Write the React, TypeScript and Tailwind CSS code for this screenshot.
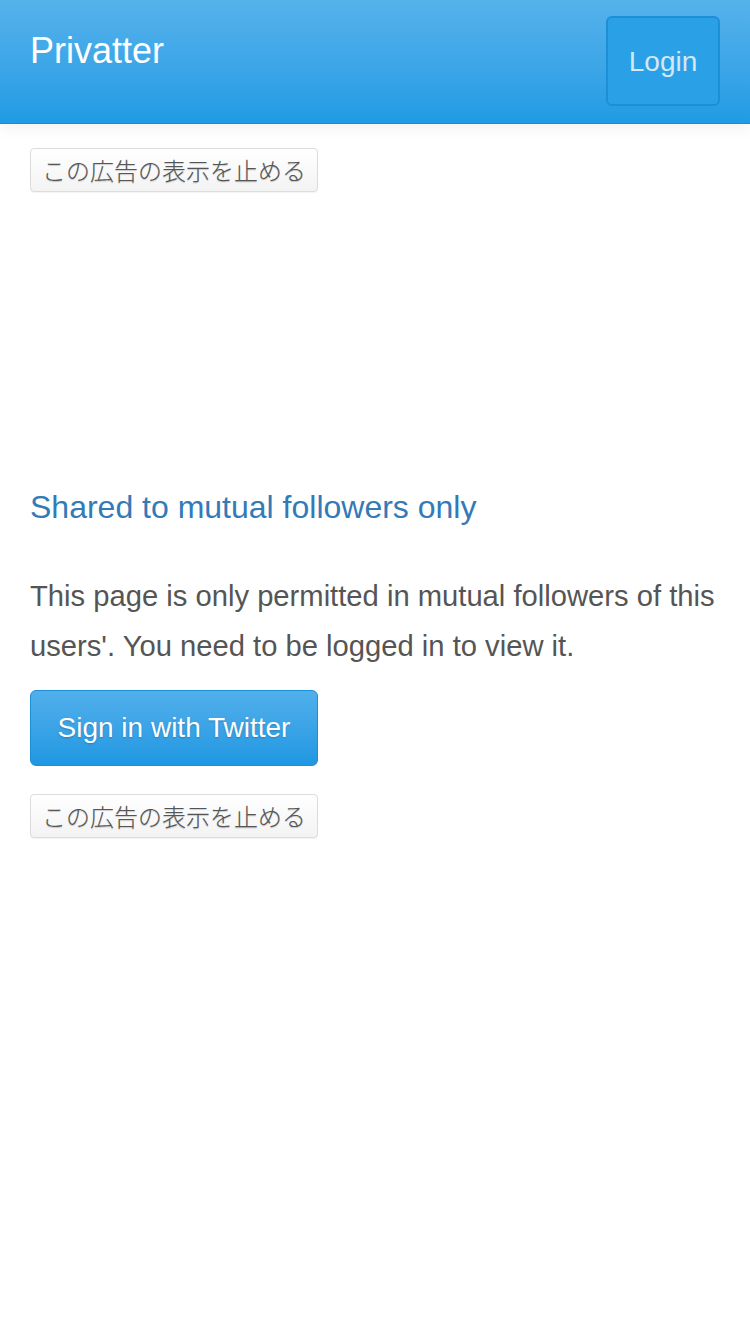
import React from 'react';

function HideAdButton() {
  return (
    <button
      type="button"
      className="block w-[288px] h-[44px] rounded-[4px] border border-[#dcdcdc] bg-gradient-to-b from-white to-[#f3f3f3] text-[24px] leading-[42px] font-light text-[#555] text-center [text-shadow:0_1px_1px_rgba(0,0,0,0.2)] shadow-[0_1px_1px_rgba(0,0,0,0.05)]"
      style={{ fontFamily: '"Noto Sans CJK JP", "Liberation Sans", sans-serif' }}
    >
      この広告の表示を止める
    </button>
  );
}

export default function App() {
  return (
    <div
      className="min-h-screen w-full bg-white text-[#555]"
      style={{ fontFamily: '"Liberation Sans", Arial, "Noto Sans CJK JP", sans-serif' }}
    >
      {/* Navbar */}
      <header className="relative z-10 h-[124px] bg-gradient-to-b from-[#55b2eb] to-[#1f9be4] border-b border-[#1a8cd5] shadow-[0_4px_16px_rgba(0,0,0,0.06)] px-[30px] flex items-start justify-between">
        <div className="pt-[31px] text-[36px] leading-[40px] text-white">Privatter</div>
        <button
          type="button"
          className="mt-[16px] w-[114px] h-[90px] rounded-[6px] border-2 border-[#1d8fd6] bg-[#2aa1e6] text-[28px] text-[#d6e6f3] flex items-center justify-center pt-[2px]"
        >
          Login
        </button>
      </header>

      <main className="px-[30px] pt-[24px]">
        <HideAdButton />

        {/* Ad slot */}
        <div className="h-[298px]" />

        <h3 className="text-[32px] leading-[35px] text-[#337ab7]">Shared to mutual followers only</h3>

        <p className="mt-[46px] text-[29.2px] leading-[50px] text-[#555]">
          This page is only permitted in mutual followers of this users'. You need to be logged in to view it.
        </p>

        <button
          type="button"
          className="mt-[19px] block w-[288px] h-[76px] rounded-[6px] border border-[#1c8fd8] bg-gradient-to-b from-[#50b0eb] to-[#1e97e2] text-[28px] text-white [text-shadow:0_1px_2px_rgba(0,0,0,0.2)]"
        >
          Sign in with Twitter
        </button>

        <div className="mt-[28px]">
          <HideAdButton />
        </div>
      </main>
    </div>
  );
}
